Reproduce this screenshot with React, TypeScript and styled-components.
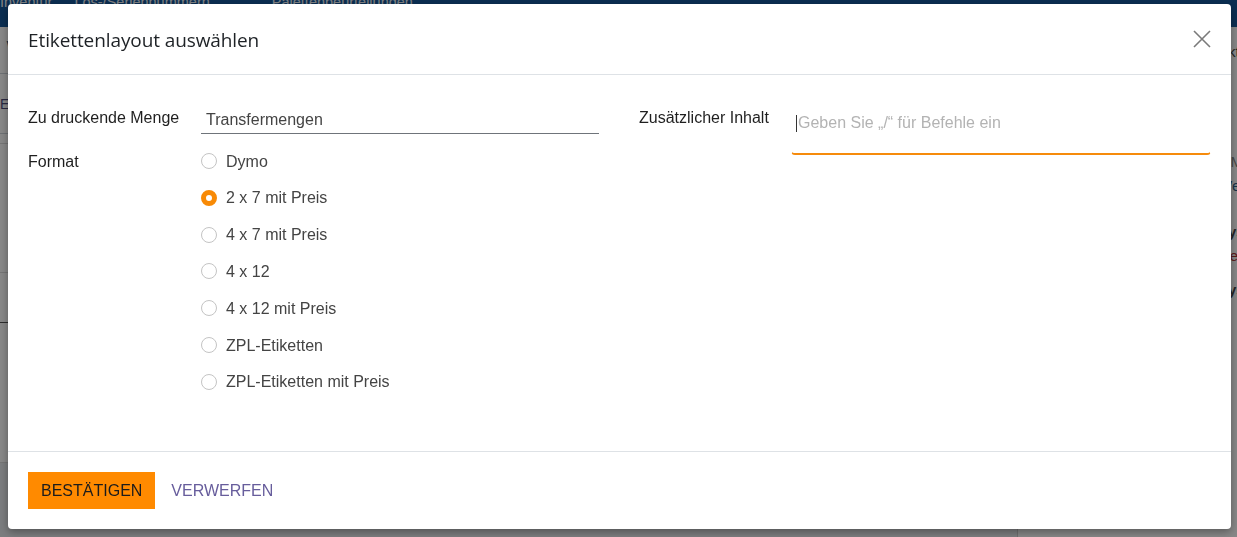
import React from 'react';
import styled, { createGlobalStyle } from 'styled-components';

const GlobalStyle = createGlobalStyle`
  html, body { margin: 0; padding: 0; }
  body {
    font-family: "Liberation Sans", Arial, sans-serif;
    background: #e9ecef;
    overflow: hidden;
  }
  *, *::before, *::after { box-sizing: border-box; }
`;

/* ---------- background page (dimmed by the backdrop) ---------- */

const Page = styled.div`
  width: 1237px;
  height: 537px;
  display: flex;
  flex-direction: column;
  overflow: hidden;
`;

const NavBar = styled.nav`
  height: 27px;
  flex: none;
  background: #15579a;
  display: flex;
  align-items: flex-start;
  overflow: hidden;
`;

const NavItem = styled.span<{ $gap: number }>`
  margin-top: -7px;
  margin-right: ${(p) => p.$gap}px;
  color: #f0f4f8;
  font-size: 14.5px;
  line-height: 18px;
  white-space: nowrap;
`;

const Workspace = styled.div`
  flex: 1;
  display: flex;
  min-height: 0;
`;

const MainArea = styled.main`
  flex: 1;
  display: flex;
  flex-direction: column;
  background: #e9ecef;
`;

const ControlPanel = styled.div`
  height: 47px;
  background: #fff;
  border-bottom: 1px solid #ced4da;
  display: flex;
  align-items: center;
`;

const Breadcrumb = styled.span`
  font-size: 26px;
  color: #1d5a86;
  margin-left: -8px;
`;

const StatusBar = styled.div`
  height: 60px;
  background: #fff;
  border-bottom: 1px solid #ced4da;
  display: flex;
  align-items: center;
  font-size: 14px;
  color: #4c4c7c;
`;

const SheetRow = styled.div<{ $h: number; $dark?: boolean }>`
  height: ${(p) => p.$h}px;
  background: #fff;
  border-bottom: 1px solid ${(p) => (p.$dark ? '#555' : '#dcdcdc')};
`;

const Chatter = styled.aside`
  width: 220px;
  flex: none;
  background: #fff;
  border-left: 1px solid #d0d0d0;
  display: flex;
  flex-direction: column;
  padding-left: 200px;
  font-size: 15px;
  color: #333;
  white-space: nowrap;
  overflow: hidden;
`;

const ChatterLine = styled.div<{ $top: number; $color?: string; $bold?: boolean }>`
  margin-top: ${(p) => p.$top}px;
  color: ${(p) => p.$color || '#444'};
  font-weight: ${(p) => (p.$bold ? 700 : 400)};
  line-height: 18px;
`;

/* ---------- modal ---------- */

const Backdrop = styled.div`
  position: fixed;
  inset: 0;
  background: rgba(0, 0, 0, 0.47);
  display: flex;
  align-items: flex-start;
  padding: 4px 6px 0 8px;
`;

const Dialog = styled.div`
  width: 1223px;
  height: 525px;
  background: #fff;
  border-radius: 4px;
  box-shadow: 0 3px 9px rgba(0, 0, 0, 0.35);
  display: flex;
  flex-direction: column;
`;

const Header = styled.header`
  height: 71px;
  flex: none;
  padding: 0 20px;
  display: flex;
  align-items: center;
  justify-content: space-between;
  border-bottom: 1px solid #dee2e6;
`;

const Title = styled.h4`
  margin: 2px 0 0;
  font-family: "Open Sans", "Noto Sans", sans-serif;
  font-size: 19px;
  font-weight: 400;
  color: #1e2226;
  letter-spacing: -0.1px;
`;

const CloseButton = styled.button`
  border: 0;
  background: none;
  padding: 0;
  width: 20px;
  height: 20px;
  display: flex;
  align-items: center;
  justify-content: center;
  cursor: pointer;
  margin-right: -1px;
`;

const Body = styled.section`
  flex: 1;
  padding: 32px 20px 0;
  display: grid;
  grid-template-columns: 571px 1fr;
  column-gap: 40px;
  align-items: start;
`;

const Group = styled.div`
  display: flex;
  flex-direction: column;
  gap: 15px;
`;

const FieldRow = styled.div<{ $labelWidth: number }>`
  display: grid;
  grid-template-columns: ${(p) => p.$labelWidth}px 1fr;
  align-items: start;
`;

const Label = styled.label<{ $pad: number }>`
  padding-top: ${(p) => p.$pad}px;
  font-size: 16px;
  line-height: 20px;
  color: #1f1f1f;
`;

const TextInput = styled.div`
  height: 27px;
  padding: 3px 5px;
  font-size: 16px;
  line-height: 20px;
  color: #444;
  border-bottom: 1px solid #6f747a;
`;

const RadioList = styled.div`
  display: flex;
  flex-direction: column;
  gap: 12.83px;
`;

const RadioItem = styled.label`
  height: 24px;
  display: flex;
  align-items: center;
  gap: 9px;
  font-size: 16px;
  line-height: 20px;
  color: #444;
  cursor: pointer;
`;

const RadioText = styled.span`
  padding-top: 1px;
`;

const RadioCircle = styled.span<{ $checked: boolean }>`
  width: 16px;
  height: 16px;
  flex: none;
  border-radius: 50%;
  background: #fff;
  border: ${(p) => (p.$checked ? '5px solid #f88a06' : '1px solid #c4c4c4')};
`;

const Editor = styled.div`
  height: 48px;
  padding: 5px 4px 0;
  font-size: 16px;
  line-height: 20px;
  color: #b3b3b3;
  border: 1px solid transparent;
  border-bottom: 2px solid #f68b0c;
  border-radius: 0 0 4px 4px;
  display: flex;
  align-items: flex-start;
`;

const Caret = styled.span`
  width: 1px;
  height: 17px;
  margin-top: 2px;
  margin-right: 1px;
  background: #333;
  flex: none;
`;

const Footer = styled.footer`
  height: 78px;
  flex: none;
  border-top: 1px solid #dee2e6;
  padding: 20px;
  display: flex;
  align-items: center;
  gap: 16px;
`;

const PrimaryButton = styled.button`
  height: 37px;
  padding: 0 13px;
  border: 0;
  border-radius: 0;
  background: #ff8a00;
  color: #1c1c1c;
  font-family: "Liberation Sans", Arial, sans-serif;
  font-size: 16px;
  text-transform: uppercase;
  cursor: pointer;
`;

const LinkButton = styled.button`
  height: 37px;
  padding: 0;
  border: 0;
  background: none;
  color: #675d9c;
  font-family: "Liberation Sans", Arial, sans-serif;
  font-size: 16px;
  text-transform: uppercase;
  cursor: pointer;
`;

const formats = [
  'Dymo',
  '2 x 7 mit Preis',
  '4 x 7 mit Preis',
  '4 x 12',
  '4 x 12 mit Preis',
  'ZPL-Etiketten',
  'ZPL-Etiketten mit Preis',
];

export default function App() {
  const [selected, setSelected] = React.useState('2 x 7 mit Preis');

  return (
    <>
      <GlobalStyle />
      <Page>
        <NavBar>
          <NavItem $gap={22}>Inventur</NavItem>
          <NavItem $gap={62}>Los-/Seriennummern</NavItem>
          <NavItem $gap={0}>Palettenbeurteilungen</NavItem>
        </NavBar>
        <Workspace>
          <MainArea>
            <ControlPanel>
              <Breadcrumb>/ WH/OUT/00021</Breadcrumb>
            </ControlPanel>
            <StatusBar>ETIKETTEN DRUCKEN</StatusBar>
            <SheetRow $h={10} />
            <SheetRow $h={129} />
            <SheetRow $h={50} $dark />
            <SheetRow $h={140} />
          </MainArea>
          <Chatter>
            <ChatterLine $top={16}>Aktivitäten</ChatterLine>
            <ChatterLine $top={92} $color="#888">2 Mitteilungen</ChatterLine>
            <ChatterLine $top={6} $color="#2f5d86">Weiterleiten</ChatterLine>
            <ChatterLine $top={28} $bold>System</ChatterLine>
            <ChatterLine $top={6} $color="#a33">Geändert</ChatterLine>
            <ChatterLine $top={16} $bold>System</ChatterLine>
          </Chatter>
        </Workspace>
      </Page>

      <Backdrop>
        <Dialog role="dialog">
          <Header>
            <Title>Etikettenlayout auswählen</Title>
            <CloseButton aria-label="Schließen">
              <svg width="18" height="18" viewBox="0 0 18 18">
                <path d="M1 1 L17 17 M17 1 L1 17" stroke="#7a7a7a" strokeWidth="1.6" fill="none" />
              </svg>
            </CloseButton>
          </Header>
          <Body>
            <Group>
              <FieldRow $labelWidth={173}>
                <Label $pad={1}>Zu druckende Menge</Label>
                <TextInput>Transfermengen</TextInput>
              </FieldRow>
              <FieldRow $labelWidth={173}>
                <Label $pad={3}>Format</Label>
                <RadioList>
                  {formats.map((f) => (
                    <RadioItem key={f} onClick={() => setSelected(f)}>
                      <RadioCircle $checked={f === selected} />
                      <RadioText>{f}</RadioText>
                    </RadioItem>
                  ))}
                </RadioList>
              </FieldRow>
            </Group>
            <Group>
              <FieldRow $labelWidth={152}>
                <Label $pad={1}>Zusätzlicher Inhalt</Label>
                <Editor>
                  <Caret />
                  Geben Sie „/“ für Befehle ein
                </Editor>
              </FieldRow>
            </Group>
          </Body>
          <Footer>
            <PrimaryButton>Bestätigen</PrimaryButton>
            <LinkButton>Verwerfen</LinkButton>
          </Footer>
        </Dialog>
      </Backdrop>
    </>
  );
}
